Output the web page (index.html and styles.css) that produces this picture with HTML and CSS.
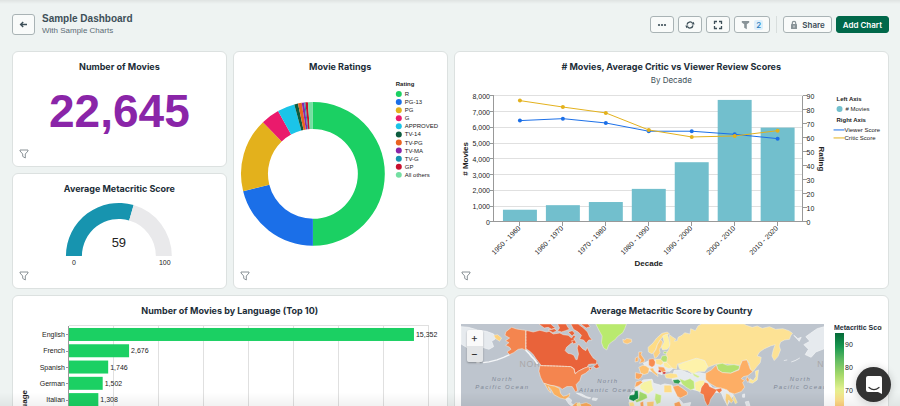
FILE: index.html
```html
<!DOCTYPE html>
<html lang="en">
<head>
    <meta charset="utf-8">
    <title>Sample Dashboard</title>
    <link rel="stylesheet" href="styles.css">
</head>
<body>
    <svg width="0" height="0" class="defs">
        <symbol id="funnel" viewBox="0 0 10 10">
            <path d="M1 1h8v1L6.3 5v4L3.7 7.400V5L1 2z" fill="none" stroke="#7d868b" stroke-width="0.9" stroke-linejoin="round"/>
        </symbol>
    </svg>

    <header class="topbar">
        <button class="btn back" aria-label="Back">
            <svg width="9" height="9" viewBox="0 0 9 9"><path d="M8 4.500H1.800M4.200 2L1.600 4.500l2.600 2.500" fill="none" stroke="#3d4f58" stroke-width="1.400"/></svg>
        </button>
        <div class="heading">
            <h1>Sample Dashboard</h1>
            <p>With Sample Charts</p>
        </div>
        <div class="actions">
            <button class="btn icon" aria-label="More">
                <svg width="10" height="10" viewBox="0 0 10 10" fill="#3d4f58"><circle cx="2" cy="5" r="1.100"/><circle cx="5" cy="5" r="1.100"/><circle cx="8" cy="5" r="1.100"/></svg>
            </button>
            <button class="btn icon" aria-label="Refresh">
                <svg width="10" height="10" viewBox="0 0 10 10"><path d="M2 4.600A3.100 3.100 0 0 1 7.600 3.300M8 5.400A3.100 3.100 0 0 1 2.400 6.700" fill="none" stroke="#3d4f58" stroke-width="1.300"/><path d="M6.600 4.400H9.600L8.600 1.800zM3.400 5.600H.4L1.400 8.200z" fill="#3d4f58"/></svg>
            </button>
            <button class="btn icon" aria-label="Full screen">
                <svg width="10" height="10" viewBox="0 0 10 10"><path d="M1.500 4V1.500H4M6 1.500H8.500V4M8.500 6V8.500H6M4 8.500H1.500V6" fill="none" stroke="#3d4f58" stroke-width="1.300"/></svg>
            </button>
            <button class="btn filters" aria-label="Filters">
                <svg width="9" height="10" viewBox="0 0 9 10"><path d="M.8 1h7.400v1.600L5.800 4.200v5L3.200 7.800V4.200L.8 2.600z" fill="#889397"/></svg>
                <span class="count">2</span>
            </button>
            <span class="divider"></span>
            <button class="btn share">
                <svg width="8" height="10" viewBox="0 0 8 10"><rect x="1" y="4" width="6" height="5" rx="0.500" fill="#889397"/><path d="M2.300 4.500V3a1.700 1.700 0 0 1 3.400 0v1.500" fill="none" stroke="#889397" stroke-width="1.200"/><path d="M4 5.500v2" stroke="#fff" stroke-width="0.800"/></svg>
                Share
            </button>
            <button class="btn add">Add Chart</button>
        </div>
    </header>

    <main class="grid">
        <section class="card">
            <h2>Number of Movies</h2>
            <div class="big-number">22,645</div>
            <button class="card-filter" aria-label="Filter"><svg width="10" height="10"><use href="#funnel"/></svg></button>
        </section>

        <section class="card tall">
            <h2>Movie Ratings</h2>
            <svg class="chart" id="donut" viewBox="0 0 213 216"></svg>
            <button class="card-filter" aria-label="Filter"><svg width="10" height="10"><use href="#funnel"/></svg></button>
        </section>

        <section class="card tall wide">
            <h2># Movies, Average Critic vs Viewer Review Scores</h2>
            <p class="subtitle">By Decade</p>
            <svg class="chart" id="combo" viewBox="0 0 434 202"></svg>
            <button class="card-filter" aria-label="Filter"><svg width="10" height="10"><use href="#funnel"/></svg></button>
        </section>

        <section class="card">
            <h2>Average Metacritic Score</h2>
            <svg class="chart" id="gauge" viewBox="0 0 213 94"></svg>
            <button class="card-filter" aria-label="Filter"><svg width="10" height="10"><use href="#funnel"/></svg></button>
        </section>

        <section class="card tall wide">
            <h2>Number of Movies by Language (Top 10)</h2>
            <svg class="chart" id="languages" viewBox="0 0 434 216"></svg>
        </section>

        <section class="card tall wide">
            <h2>Average Metacritic Score by Country</h2>
            <div class="map-row">
                <div class="map">
                    <svg viewBox="0 0 1092 600">
                        <rect width="1092" height="600" fill="#bec5ce"/>
                        <text class="region" x="176" y="130">NORTH AMERICA</text>
                        <text class="region" x="1070" y="130">N</text>
                        <!-- land without data -->
                        <g fill="#e6eaee" stroke="#f4f6f8" stroke-width="2" stroke-linejoin="round">
                            <path d="M0 8L22 10 50 18 76 22 98 30 104 44 92 52 98 68 84 76 64 70 52 80 40 66 20 72 0 60Z"/>
                            <path d="M1092 8L1070 14 1050 28 1036 38 1048 52 1030 62 1044 76 1034 92 1052 100 1066 84 1092 74Z"/>
                            <path d="M1000 34l12 10 10-4-6 12zM1018 102l-14 8-12 4M980 108l-10 2"/>
                            <path d="M146 92L128 100 108 108 84 114 66 116M56 116l-10 0" fill="none" stroke-width="4"/>
                            <path d="M194 78L204 88 212 98 220 106 230 120" fill="none" stroke-width="5"/>
                            <path d="M347 208L362 210 376 218 390 222 384 224 366 218ZM396 222l14 2-4 6-12-2z"/>
                            <path d="M313 224L324 222 332 228 330 238 344 246 340 252 324 240Z"/>
                            <path d="M532 180L548 168 574 166 578 178 600 184 612 180 634 184 640 200 656 226 668 240 690 236 680 270 660 300 650 420 600 440 580 300 540 280 510 250 504 220Z"/>
                            <path d="M640 140L660 138 690 150 716 146 736 150 740 172 756 192 790 196 812 206 818 214 800 244 790 226 782 206 756 206 730 200 700 198 676 186 650 176 634 170Z"/>
                            <path d="M846 212l6-2 0 10-6 0zM854 234l10-2 4 14-10 2z"/>
                            <path d="M548 118L570 108 600 108 628 120 638 132 628 142 612 142 604 152 580 144 560 140Z"/>
                        </g>
                        <!-- countries -->
                        <g stroke="#f3f1e6" stroke-width="1.500" stroke-linejoin="round">
                            <path fill="#e9633a" d="M195 19L195 74 207 82 217 92 225 104 235 117 241 125 329 128 339 134 343 150 352 142 367 134 379 130 383 122 392 120 407 120 408 110 397 102 387 87 379 70 375 80 365 74 353 60 349 72 353 90 349 107 345 107 339 94 331 90 321 88 313 80 317 70 331 58 342 52 339 44 345 37 338 34 332 42 322 34 307 32 297 27 277 30 265 22 257 24 237 19 217 24Z"/>
                            <path fill="#e9633a" d="M234 0L270 0 276 6 284 12 272 16 262 10 250 12 242 6ZM290 0L316 0 320 8 326 16 314 20 302 24 290 20 296 12ZM262 18L280 14 288 20 276 26ZM330 0L352 0 368 12 380 24 386 38 394 48 384 48 376 58 368 48 356 46 362 34 352 24 338 16ZM322 24l12-4 8 8-8 8zM360 0l22 0 6 8-12 4zM332 50l10-2 4 8-8 4z"/>
                            <path fill="#e9633a" d="M398 128l12-10 6 12-10 4zM380 132l14-2-4 8z"/>
                            <path fill="#f4854f" d="M135 23L152 10 167 15 180 17 194 19 194 79 184 74 172 76 158 86 146 92 138 84 150 76 146 70 134 64 144 56 134 50 146 42 132 34Z"/>
                            <path fill="#f4854f" d="M237 125L329 128 339 134 343 150 352 142 372 132 384 128 386 138 374 148 362 154 357 170 346 182 350 200 344 204 334 188 318 188 304 196 296 190 282 186 268 184 248 178 239 160 234 142Z"/>
                            <path fill="#fbb05e" d="M250 178L267 184 282 187 296 194 299 208 307 217 319 214 327 208 325 218 313 226 297 222 279 212 270 196 262 188 270 206 264 202 256 188Z"/>
                            <path fill="#fbab5b" d="M336 244L346 236 360 240 376 236 390 242 396 252 420 262 440 300 400 400 350 400 330 280Z"/>
                            <path fill="#ffe391" d="M348 240L356 236 360 246 350 250Z"/>
                            <path fill="#b9ea6e" d="M405 0L497 0 492 14 486 26 470 38 462 48 452 54 444 62 438 78 428 72 422 56 424 36 414 18Z"/>
                            <path fill="#fdc778" d="M486 46L492 48 498 43 512 46 513 54 499 60 488 56Z"/>
                            <path fill="#fed27d" d="M98 34L110 32 122 42 116 52 104 44Z"/>
                            <!-- europe -->
                            <path fill="#fedc86" d="M563 84L562 70 576 58 588 42 604 28 620 24 626 30 610 34 598 48 590 62 584 78 574 90Z"/>
                            <path fill="#fdd07c" d="M578 88L586 76 590 62 600 46 606 54 602 68 596 76 598 86 590 98 582 104Z"/>
                            <path fill="#feef9f" d="M606 36L620 30 624 44 628 64 620 76 606 78 602 70 610 54Z"/>
                            <path fill="#fdae61" d="M534 84L544 84 541 92 552 108 550 114 536 118 541 108 534 100ZM524 102L532 98 532 112 523 114Z"/>
                            <path fill="#fdc272" d="M534 130L546 124 556 126 566 134 562 148 550 152 540 148Z"/>
                            <path fill="#fca55d" d="M524 146L546 150 542 160 534 166 524 164Z"/>
                            <path fill="#f78b50" d="M564 106L578 104 584 114 582 124 574 130 564 124Z"/>
                            <path fill="#fee28f" d="M584 106L604 106 608 118 600 124 586 120Z"/>
                            <path fill="#fdc070" d="M566 134L578 132 580 140 590 150 592 158 584 152 574 144Z"/>
                            <path fill="#fba15b" d="M592 128L610 130 616 142 606 146 594 140Z"/>
                            <path fill="#cc1f27" d="M594 138L602 140 600 146 592 144ZM606 144L616 144 614 150 606 150Z"/>
                            <path fill="#b5e072" d="M604 96L616 94 624 106 622 114 608 114 600 106ZM610 82l10 2-4 6-8-2z"/>
                            <path fill="#feeb9c" d="M608 116L626 114 642 122 640 130 624 134 610 128Z"/>
                            <path fill="#fee18c" d="M612 152L630 148 648 150 652 160 634 164 616 162Z"/>
                            <!-- asia -->
                            <path fill="#fde294" d="M624 77L628 60 626 32 634 38 646 46 640 52 650 50 652 40 664 34 672 26 688 30 690 14 704 20 712 6 722 0 850 0 857 4 875 10 890 6 905 13 927 8 945 16 967 14 985 20 996 28 990 36 987 46 972 48 960 54 956 66 960 78 952 98 941 110 934 96 938 78 944 62 930 66 912 74 897 84 890 96 902 100 899 116 889 128 877 143 869 136 866 118 859 108 845 110 839 124 800 120 767 120 742 130 732 110 707 103 677 113 650 120 647 136 634 132 627 124 618 116 620 100 616 90Z"/>
                            <path fill="#fef2aa" d="M652 122L677 113 707 103 732 110 742 130 732 143 712 143 697 150 680 140 664 138 656 134Z"/>
                            <path fill="#cfec8b" d="M694 146L706 152 718 158 712 162 700 156Z"/>
                            <path fill="#b4e06f" d="M767 122L785 118 800 124 820 122 837 126 835 136 810 148 785 146 772 138Z"/>
                            <path fill="#fdae65" d="M735 148L752 138 767 123 772 138 785 146 810 148 835 138 839 124 845 110 859 108 869 136 877 143 862 155 849 158 842 164 852 170 846 176 852 190 842 203 822 210 807 206 800 198 787 194 767 190 747 178 735 166Z"/>
                            <path fill="#f47a48" d="M722 188L730 174 742 178 747 188 765 196 782 192 784 200 776 208 768 200 760 212 750 226 746 240 740 246 732 230 728 212 718 208Z"/>
                            <path fill="#fef0a0" d="M702 176L716 170 732 170 730 180 720 192 718 204 704 198Z"/>
                            <path fill="#bbe678" d="M656 164L672 170 688 164 700 172 702 194 690 198 676 190 664 180Z"/>
                            <path fill="#2f9e54" d="M636 168L652 166 660 172 654 180 640 178Z"/>
                            <path fill="#fba45e" d="M636 188L652 184 664 192 680 204 680 212 660 222 650 218Z"/>
                            <path fill="#fee795" d="M868 164L878 170 886 158 884 142 894 138 892 154 890 168 876 178 866 176Z"/>
                            <path fill="#fca860" d="M860 158L866 168 862 176 856 166Z"/>
                            <path fill="#fdd27d" d="M796 208L806 212 818 230 812 238 804 228 800 246 794 228Z"/>
                            <path fill="#fee58f" d="M818 212l6 10 6 14-6 4-6-14z"/>
                            <!-- africa -->
                            <path fill="#fca55d" d="M526 174L540 170 546 176 532 186 522 190Z"/>
                            <path fill="#f6f3a3" d="M538 184L550 174 572 168 574 184 578 198 562 210 538 194Z"/>
                            <path fill="#128a49" d="M506 214L520 212 522 200 532 200 534 224 518 232 504 226Z"/>
                            <path fill="#a0d96a" d="M536 202L558 212 560 222 544 230 528 236 522 230 534 224Z"/>
                            <path fill="#fedb86" d="M610 184L632 184 634 206 610 206Z"/>
                            <path fill="#c2e97f" d="M584 208L602 214 600 236 588 242 582 226Z"/>
                            <path fill="#fee08b" d="M504 236L518 234 522 246 508 250Z"/>
                            <path fill="#fba45c" d="M538 236L548 232 550 260 540 260ZM640 238L656 232 664 250 644 260Z"/>
                            <path fill="#fdca77" d="M558 234L580 232 578 256 560 256Z"/>
                        </g>
                        <path d="M195 19V76M241 125L329 128 339 134 343 150" fill="none" stroke="#fbd9c6" stroke-width="2" stroke-dasharray="6 3"/>
                        <text class="ocean" x="124" y="172">North</text>
                        <text class="ocean" x="124" y="196">Pacific Ocean</text>
                        <text class="ocean" x="441" y="178">North</text>
                        <text class="ocean" x="441" y="204">Atlantic Ocean</text>
                        <text class="ocean" x="1020" y="172">North</text>
                        <text class="ocean" x="1020" y="196">Pacific Ocean</text>
                    </svg>
                    <div class="zoom">
                        <button aria-label="Zoom in">+</button>
                        <button aria-label="Zoom out" class="out">−</button>
                    </div>
                </div>
                <div class="scale">
                    <h3>Metacritic Score</h3>
                    <svg viewBox="0 0 48 190">
                        <defs>
                            <linearGradient id="ramp" x1="0" y1="0" x2="0" y2="1">
                                <stop offset="0" stop-color="#046a38"/>
                                <stop offset="0.100" stop-color="#1a9850"/>
                                <stop offset="0.200" stop-color="#66bd63"/>
                                <stop offset="0.300" stop-color="#a6d96a"/>
                                <stop offset="0.400" stop-color="#e2f08f"/>
                                <stop offset="0.480" stop-color="#fee08b"/>
                                <stop offset="0.600" stop-color="#fdae61"/>
                                <stop offset="0.800" stop-color="#f46d43"/>
                                <stop offset="1" stop-color="#a50026"/>
                            </linearGradient>
                        </defs>
                        <rect x="1" y="1" width="9" height="140" fill="url(#ramp)"/>
                        <text class="tick" x="11" y="15">90</text>
                        <text class="tick" x="11" y="38">80</text>
                        <text class="tick" x="11" y="61">70</text>
                    </svg>
                </div>
            </div>
        </section>
    </main>

    <button class="chat" aria-label="Open chat">
        <svg width="18" height="20" viewBox="0 0 18 20"><path d="M3 1h12a2 2 0 0 1 2 2v16l-4-2H3a2 2 0 0 1-2-2V3a2 2 0 0 1 2-2z" fill="#fff"/><path d="M4 12.500c3 2.500 7 2.500 10 0" fill="none" stroke="#333" stroke-width="1.200" stroke-linecap="round"/></svg>
    </button>

    <script>
    var ratings = [
        ["R", 180, "#1bd063"],
        ["PG-13", 76, "#1b6fe8"],
        ["PG", 60, "#e3b11c"],
        ["G", 15, "#ea1a6c"],
        ["APPROVED", 14, "#1bc4e8"],
        ["TV-14", 3, "#0d5c3f"],
        ["TV-PG", 3, "#ea6320"],
        ["TV-MA", 2, "#8a25a8"],
        ["TV-G", 1, "#1794af"],
        ["GP", 2, "#c8102e"],
        ["All others", 4, "#74dfa2"]
    ];
    // decade, movies, viewer score, critic score
    var decades = [
        ["1950 - 1960", 770, 72.4, 86.7],
        ["1960 - 1970", 1060, 73.8, 82.1],
        ["1970 - 1980", 1260, 70.7, 77.9],
        ["1980 - 1990", 2095, 64.8, 65.7],
        ["1990 - 2000", 3790, 64.8, 60.7],
        ["2000 - 2010", 7750, 62.6, 61.4],
        ["2010 - 2020", 5990, 59.5, 65.2]
    ];
    var languages = [
        ["English", 15352],
        ["French", 2676],
        ["Spanish", 1746],
        ["German", 1502],
        ["Italian", 1308]
    ];

    function commas(n){
        return n.toLocaleString("en-US");
    }
    function text(x, y, str, cls, extra){
        return "<text x='" + x + "' y='" + y + "' class='" + cls + "' " + (extra || "") + ">" + str + "</text>";
    }
    function line(x1, y1, x2, y2, cls){
        return "<line x1='" + x1 + "' y1='" + y1 + "' x2='" + x2 + "' y2='" + y2 + "' class='" + cls + "'/>";
    }
    // ring segment, angles in degrees clockwise from 12 o'clock
    function arc(cx, cy, r, inner, from, to, color){
        function pt(rad, deg){
            var a = (deg - 90) * Math.PI / 180;
            return (cx + rad * Math.cos(a)).toFixed(2) + " " + (cy + rad * Math.sin(a)).toFixed(2);
        }
        var big = to - from > 180 ? 1 : 0;
        return "<path fill='" + color + "' d='M" + pt(r, from) + "A" + r + " " + r + " 0 " + big + " 1 " + pt(r, to) +
            "L" + pt(inner, to) + "A" + inner + " " + inner + " 0 " + big + " 0 " + pt(inner, from) + "Z'/>";
    }

    function drawDonut(){
        var out = text(162, 14, "Rating", "legend-title");
        var angle = 0;
        for(var i = 0; i < ratings.length; i++){
            out += arc(79, 102, 72, 45, angle, angle + ratings[i][1], ratings[i][2]);
            angle += ratings[i][1];
            var y = 22 + i * 81 / 10;
            out += "<circle cx='165' cy='" + y + "' r='3' fill='" + ratings[i][2] + "'/>";
            out += text(171, y + 2, ratings[i][0], "legend");
        }
        document.getElementById("donut").innerHTML = out;
    }

    function drawGauge(){
        var split = -90 + 180 * 0.59;
        var out = arc(106, 62, 53, 37, -90, split, "#1794af");
        out += arc(106, 62, 53, 37, split, 90, "#e9e9eb");
        out += text(106, 53, "59", "gauge-value");
        out += text(61, 71, "0", "tick middle");
        out += text(152, 71, "100", "tick middle");
        document.getElementById("gauge").innerHTML = out;
    }

    function drawCombo(){
        var left = 39, right = 348, top = 10, bottom = 136, step = 43;
        var out = "", viewer = [], critic = [], dots = "";
        for(var t = 0; t <= 8; t++){
            var ty = bottom - t * (bottom - top) / 8;
            out += line(left, ty, right, ty, "gridline");
            out += line(left - 4, ty, left, ty, "axis");
            out += text(left - 4, ty + 3, commas(t * 1000), "tick end");
        }
        for(var r = 0; r <= 9; r++){
            var ry = bottom - r * (bottom - top) / 9;
            out += line(right, ry, right + 4, ry, "axis");
            out += text(right + 4, ry + 3, r * 10, "tick");
        }
        for(var i = 0; i < decades.length; i++){
            var cx = left + 26 + i * step;
            var h = decades[i][1] * (bottom - top) / 8000;
            out += "<rect x='" + (cx - 17) + "' y='" + (bottom - h) + "' width='34' height='" + h + "' fill='#72bfcd'/>";
            out += line(cx, bottom, cx, bottom + 4, "axis");
            out += text(0, 0, decades[i][0], "tick end", "transform='translate(" + (cx + 1) + " " + (bottom + 7) + ") rotate(-45)'");
            var vy = bottom - decades[i][2] * 1.4, cy = bottom - decades[i][3] * 1.4;
            viewer.push(cx + "," + vy);
            critic.push(cx + "," + cy);
            dots += "<circle cx='" + cx + "' cy='" + vy + "' r='2' fill='#1b6fe8'/>";
            dots += "<circle cx='" + cx + "' cy='" + cy + "' r='2' fill='#e3b11c'/>";
        }
        out += line(left, top, left, bottom, "axis") + line(right, top, right, bottom, "axis") + line(left, bottom, right, bottom, "axis");
        out += "<polyline class='series' stroke='#1b6fe8' points='" + viewer.join(" ") + "'/>";
        out += "<polyline class='series' stroke='#e3b11c' points='" + critic.join(" ") + "'/>" + dots;
        out += text(0, 0, "# Movies", "axis-title", "transform='translate(13 73) rotate(-90)'");
        out += text(0, 0, "Rating", "axis-title", "transform='translate(364 73) rotate(90)'");
        out += text(194, 180, "Decade", "axis-title");
        out += text(382, 15, "Left Axis", "legend-title");
        out += "<circle cx='385' cy='23' r='3' fill='#72bfcd'/>" + text(391, 25, "# Movies", "legend");
        out += text(382, 36, "Right Axis", "legend-title");
        out += "<path class='series' stroke='#1b6fe8' d='M379 44h11'/>" + text(390, 46, "Viewer Score", "legend");
        out += "<path class='series' stroke='#e3b11c' d='M379 52h11'/>" + text(390, 54, "Critic Score", "legend");
        document.getElementById("combo").innerHTML = out;
    }

    function drawLanguages(){
        var left = 56, top = 10, bottom = 173, grid = 45;
        var out = line(left, top, left + grid * 8, top, "gridline");
        for(var g = 1; g <= 8; g++){
            out += line(left + g * grid, top, left + g * grid, bottom, "gridline");
        }
        for(var i = 0; i < languages.length; i++){
            var y = top + 2 + i * (bottom - top) / 10;
            var w = languages[i][1] * grid / 2000;
            out += "<rect x='" + left + "' y='" + y + "' width='" + w + "' height='13' fill='#1bd063'/>";
            out += line(left - 3, y + 7, left, y + 7, "axis");
            out += text(left - 4, y + 9, languages[i][0], "tick end");
            out += text(left + w + 2, y + 9, commas(languages[i][1]), "tick");
        }
        out += line(left, top, left, bottom, "axis");
        out += text(0, 0, "Language", "axis-title", "transform='translate(14 93) rotate(-90)'");
        document.getElementById("languages").innerHTML = out;
    }

    drawDonut();
    drawGauge();
    drawCombo();
    drawLanguages();
    </script>
</body>
</html>
```
FILE: styles.css
```css
* {
    box-sizing: border-box;
}
body {
    margin: 0;
    height: 100vh;
    overflow: hidden;
    background: #eef3f2 linear-gradient(#dfe3e2, #eef3f2) no-repeat 0 0 / 100% 4px;
    font-family: Inter, "Liberation Sans", sans-serif;
    color: #1c2d38;
}
/* soft shade along the bottom of the window */
body::after {
    content: "";
    position: fixed;
    left: 0;
    right: 0;
    bottom: 0;
    height: 14px;
    background: linear-gradient(rgba(0, 0, 0, 0), rgba(0, 0, 0, 0.05));
    pointer-events: none;
}
h1, h2, h3, p {
    margin: 0;
}
button {
    font-family: inherit;
    cursor: pointer;
}
.defs {
    position: absolute;
}

/* header */
.topbar {
    display: flex;
    align-items: center;
    padding: 13px 11px 15px 12px;
}
.heading {
    margin-left: 7px;
}
.heading h1 {
    font-family: "Liberation Sans", sans-serif;
    font-size: 10px;
    line-height: 12px;
    color: #3d4f58;
}
.heading p {
    font-family: "Liberation Sans", sans-serif;
    font-size: 8px;
    line-height: 11px;
    color: #5c6c75;
}
.btn {
    display: flex;
    align-items: center;
    justify-content: center;
    gap: 4px;
    height: 17px;
    padding: 0 6px;
    border: 1px solid #a9b3b5;
    border-radius: 3px;
    background: #f9fbfa;
    color: #3d4f58;
    font-size: 8px;
    font-weight: 600;
}
.back {
    width: 23px;
    height: 21px;
    padding: 0;
}
.actions {
    display: flex;
    align-items: center;
    gap: 4px;
    margin-left: auto;
}
.icon {
    width: 24px;
    padding: 0;
}
.filters {
    width: 36px;
    padding: 0;
}
.count {
    padding: 0 2px;
    border-radius: 2px;
    background: #ddeffb;
    color: #2b7fc0;
    line-height: 10px;
    font-weight: 500;
}
.divider {
    width: 1px;
    height: 17px;
    margin: 0 2px;
    background: #d8dedd;
}
.add {
    border-color: #00684a;
    background: #00684a;
    color: #fff;
}

/* cards */
.grid {
    display: grid;
    grid-template-columns: repeat(4, 1fr);
    grid-auto-rows: 116px;
    gap: 6px;
    padding: 0 11px 12px 12px;
}
.card {
    position: relative;
    display: flex;
    flex-direction: column;
    padding-top: 9px;
    border: 1px solid #dce1e0;
    border-radius: 6px;
    background: #fff;
    overflow: hidden;
}
.tall {
    grid-row: span 2;
}
.wide {
    grid-column: span 2;
}
.card h2 {
    font-size: 9px;
    font-weight: 700;
    line-height: 11px;
    text-align: center;
}
.subtitle {
    margin-top: 3px;
    font-size: 8px;
    line-height: 11px;
    text-align: center;
    color: #3d4f58;
}
.card-filter {
    position: absolute;
    left: 6px;
    bottom: 7px;
    padding: 0;
    border: 0;
    background: none;
    line-height: 0;
}
.big-number {
    margin-top: 13px;
    font: bold 46px/52px "Liberation Sans", sans-serif;
    text-align: center;
    color: #8a25a8;
}

/* charts */
.chart {
    display: block;
    width: 100%;
}
svg text {
    font-family: "Liberation Sans", sans-serif;
    fill: #222;
}
.tick {
    font-size: 7px;
}
.end {
    text-anchor: end;
}
.middle {
    text-anchor: middle;
}
.legend {
    font-size: 6px;
}
.legend-title {
    font-size: 6px;
    font-weight: bold;
}
.axis-title {
    font-size: 8px;
    font-weight: bold;
    text-anchor: middle;
}
.gauge-value {
    font-size: 13px;
    text-anchor: middle;
}
.gridline {
    stroke: #e0e0e0;
    shape-rendering: crispEdges;
}
.axis {
    stroke: #999;
    shape-rendering: crispEdges;
}
.series {
    fill: none;
    stroke-width: 1;
}

/* map */
.map-row {
    display: flex;
    gap: 10px;
    padding: 8px 6px;
}
.map {
    position: relative;
    flex: 1;
}
.map > svg {
    display: block;
    width: 100%;
}
.map .region {
    font-size: 26px;
    letter-spacing: 2px;
    fill: #a9a7a8;
}
.map .ocean {
    font-size: 18px;
    font-style: italic;
    letter-spacing: 4px;
    text-anchor: middle;
    fill: #7f8896;
}
.zoom {
    position: absolute;
    left: 6px;
    top: 6px;
    display: flex;
    flex-direction: column;
    border-radius: 2px;
    overflow: hidden;
    box-shadow: 0 1px 2px rgba(0, 0, 0, 0.3);
}
.zoom button {
    width: 16px;
    height: 16px;
    padding: 0;
    border: 0;
    background: #fafafa;
    color: #333;
    font-size: 11px;
    line-height: 16px;
}
.zoom .out {
    background: #e3e5e7;
}
.scale {
    width: 48px;
    overflow: hidden;
}
.scale h3 {
    font: bold 7px/8px "Liberation Sans", sans-serif;
    white-space: nowrap;
}
.chat {
    position: fixed;
    right: 9px;
    bottom: 4px;
    display: flex;
    align-items: center;
    justify-content: center;
    width: 35px;
    height: 35px;
    padding: 0;
    border: 0;
    border-radius: 50%;
    background: #333;
    box-shadow: 0 1px 8px rgba(0, 0, 0, 0.2);
}
```
